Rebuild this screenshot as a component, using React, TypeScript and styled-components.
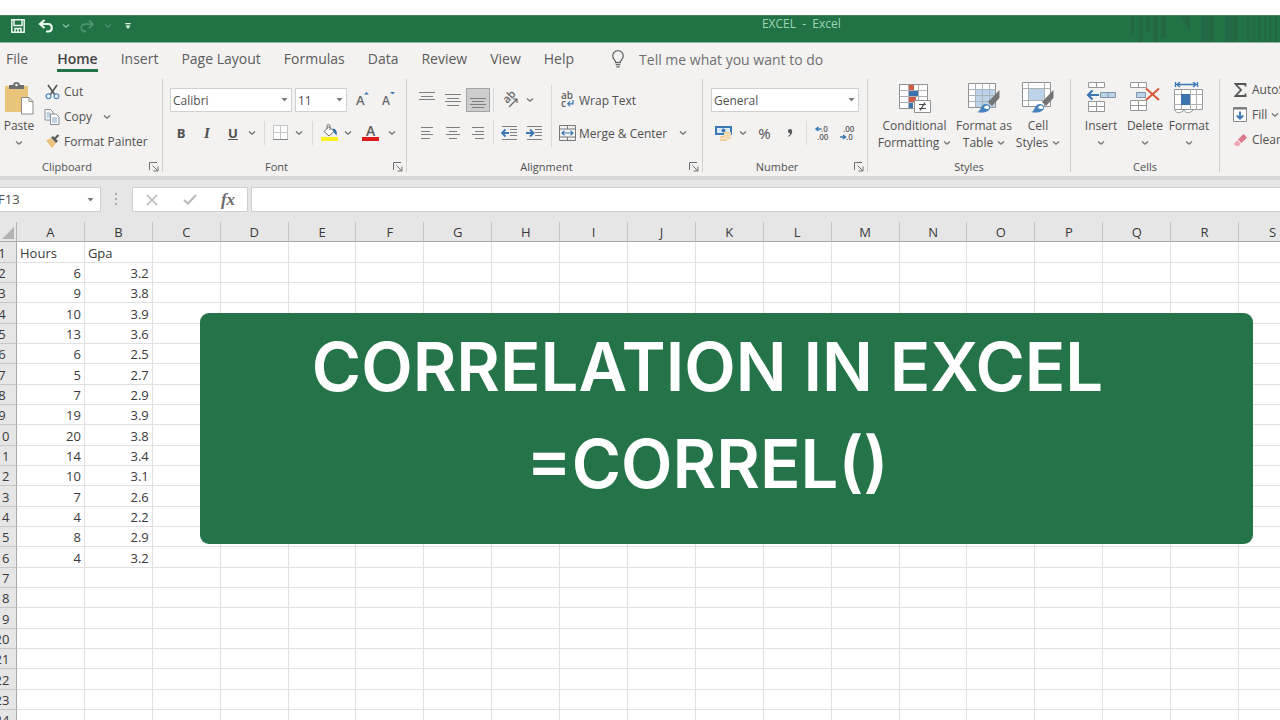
import React from "react";
import styled, { createGlobalStyle, css } from "styled-components";

const GlobalStyle = createGlobalStyle`
  * { box-sizing: border-box; }
  body {
    margin: 0;
    background: #ffffff;
    color: #505050;
    font-family: "Open Sans", "Noto Sans", sans-serif;
    font-size: 12px;
    line-height: 17px;
    overflow: hidden;
  }
  button, select, input { font: inherit; color: inherit; }
  svg { flex: none; }
`;

const GRAY = "#808080";
const BLUE = "#3b78b4";

/* ---------- window frame ---------- */

const Window = styled.div`
  position: relative;
  height: 100vh;
  padding-top: 15px;
  overflow: hidden;
`;

const TitleBar = styled.header`
  display: grid;
  grid-template-columns: 25fr 17fr;
  height: 28px;
  background: #217346;
  border-top: 1px solid #3f8560;
  border-bottom: 1px solid #8fb8a0;
`;

const QuickAccess = styled.div`
  display: flex;
  align-items: center;
  height: 20px;
  padding-left: 6px;
`;

const QuickButton = styled.button<{ $w: number; $dim?: boolean }>`
  display: flex;
  flex: none;
  align-items: center;
  justify-content: center;
  width: ${(p) => p.$w}px;
  height: 20px;
  padding: 0;
  border: 0;
  background: none;
  color: ${(p) => (p.$dim ? "#4f9370" : "#e9f5ee")};
`;

const TitleArea = styled.div`
  display: flex;
  justify-content: space-between;
`;

const DocumentTitle = styled.h1`
  margin: 0;
  font-size: 12px;
  font-weight: 400;
  line-height: 15px;
  color: #9fd3b5;
  white-space: pre;
`;

/* ---------- tabs ---------- */

const TabRow = styled.nav`
  display: flex;
  gap: 23px;
  height: 34px;
  padding: 6px 0 0 6px;
  background: #f3f2f1;
  font-size: 14px;
  white-space: nowrap;
`;

const Tab = styled.a<{ $active?: boolean }>`
  height: 23px;
  line-height: 20px;
  color: ${(p) => (p.$active ? "#444444" : "#5c5c5c")};
  font-weight: ${(p) => (p.$active ? 600 : 400)};
  text-decoration: none;
  border-bottom: 3px solid ${(p) => (p.$active ? "#217346" : "transparent")};

  &:first-child { margin-right: 6px; }
`;

const TellMe = styled.button`
  display: flex;
  align-items: center;
  gap: 14px;
  height: 20px;
  margin-left: 14px;
  padding: 0;
  border: 0;
  background: none;
  color: #707070;
`;

/* ---------- ribbon ---------- */

const Ribbon = styled.div`
  display: flex;
  height: 103px;
  background: #f3f2f1;
  border-bottom: 4px solid #d6d6d6;
  white-space: nowrap;
`;

const GroupBox = styled.section<{ $w: number; $cut?: boolean }>`
  display: flex;
  flex: none;
  flex-direction: column;
  width: ${(p) => p.$w}px;
  ${(p) => p.$cut && css`margin-left: -12px; padding-left: 12px;`}
`;

const GroupBody = styled.div`
  display: flex;
  height: 81px;
`;

const GroupFooter = styled.div<{ $shift?: boolean }>`
  display: flex;
  align-items: center;
  height: 17px;
  margin-left: ${(p) => (p.$shift ? -12 : 0)}px;
  font-size: 11px;
`;

const GroupLabel = styled.span`
  flex: 1;
  text-align: center;
`;

const GroupDivider = styled.div`
  flex: none;
  width: 1px;
  height: 93px;
  margin-top: 2px;
  background: #d0cfce;
`;

const SmallDivider = styled.div<{ $m: number }>`
  flex: none;
  width: 1px;
  height: 24px;
  margin: 0 ${(p) => p.$m}px;
  background: #dad9d8;
`;

const TallDivider = styled.div`
  width: 1px;
  height: 62px;
  margin: 8px 7px 0 4px;
  background: #dad9d8;
`;

const Tool = styled.button<{ $w: number; $on?: boolean }>`
  display: flex;
  flex: none;
  align-items: center;
  justify-content: center;
  width: ${(p) => p.$w}px;
  height: 24px;
  padding: 0;
  border: 1px solid ${(p) => (p.$on ? "#a3a3a3" : "transparent")};
  background: ${(p) => (p.$on ? "#cdcdcd" : "none")};
`;

const Glyph = styled.span<{ $kind: "bold" | "italic" | "under" | "percent" }>`
  font-size: ${(p) => (p.$kind === "percent" ? 15 : 13)}px;
  font-weight: ${(p) => (p.$kind === "percent" ? 400 : 700)};
  ${(p) => p.$kind === "italic" && css`font-family: "Liberation Serif", serif; font-size: 15px; font-style: italic;`}
  ${(p) => p.$kind === "under" && css`text-decoration: underline;`}
`;

const ToolRows = styled.div<{ $pad: number }>`
  display: flex;
  flex-direction: column;
  gap: 9px;
  padding: 11px 0 0 ${(p) => p.$pad}px;
`;

const ToolRow = styled.div<{ $gap?: number }>`
  display: flex;
  align-items: center;
  gap: ${(p) => p.$gap || 0}px;
  height: 24px;
`;

const LabelTool = styled.button<{ $h: number }>`
  display: flex;
  align-items: center;
  gap: 4px;
  height: ${(p) => p.$h}px;
  padding: 0;
  border: 0;
  background: none;
  text-align: left;
`;

const LabelIcon = styled.span`
  display: flex;
  justify-content: center;
  width: 16px;
`;

const TextColumn = styled.div<{ $top: number; $left: number }>`
  display: flex;
  flex-direction: column;
  padding: ${(p) => p.$top}px 0 0 ${(p) => p.$left}px;
`;

const ChevronGap = styled.span<{ $w: number }>`
  display: flex;
  justify-content: flex-end;
  width: ${(p) => p.$w}px;
`;

const BigTools = styled.div`
  display: flex;
  padding-left: 8px;
`;

const BigTool = styled.button<{ $w: number }>`
  display: flex;
  flex: none;
  flex-direction: column;
  align-items: center;
  width: ${(p) => p.$w}px;
  height: 76px;
  margin-top: 5px;
  padding: 0;
  border: 0;
  background: none;
`;

const BigIcon = styled.span`
  display: flex;
  align-items: flex-start;
  height: 35px;
`;

const BigLine = styled.span`
  display: flex;
  align-items: center;
  gap: 4px;
  height: 17px;
`;

const Picker = styled.div<{ $w: number }>`
  position: relative;
  width: ${(p) => p.$w}px;
  height: 24px;

  select {
    width: 100%;
    height: 24px;
    padding: 0 2px;
    border: 1px solid #d2d0ce;
    border-radius: 0;
    background: #ffffff;
    appearance: none;
  }
  svg {
    position: absolute;
    top: 10px;
    right: 4px;
    pointer-events: none;
  }
`;

/* ---------- formula bar ---------- */

const FormulaBar = styled.div`
  display: flex;
  align-items: center;
  height: 42px;
  padding-bottom: 4px;
  background: #e6e6e6;
`;

const NameBox = styled.div`
  position: relative;
  width: 101px;

  input {
    width: 100%;
    height: 25px;
    padding: 0;
    border: 1px solid #d0d0d0;
    border-left: 0;
    background: #ffffff;
    font-size: 13px;
    text-indent: -2px;
  }
  svg {
    position: absolute;
    top: 11px;
    right: 7px;
  }
`;

const Grip = styled.div`
  display: flex;
  justify-content: center;
  width: 31px;
`;

const FormulaButtons = styled.div`
  display: flex;
  width: 116px;
  height: 25px;
  margin-right: 3px;
  background: #ffffff;
  border: 1px solid #d0d0d0;
`;

const FormulaInput = styled.input`
  flex: 1;
  min-width: 0;
  height: 25px;
  border: 1px solid #d0d0d0;
  border-right: 0;
  background: #ffffff;
`;

const FxGlyph = styled.span`
  font-family: "Liberation Serif", serif;
  font-size: 17px;
  font-style: italic;
  font-weight: 700;
  color: #6c6c6c;
`;

/* ---------- worksheet ---------- */

const Sheet = styled.table`
  width: calc(100% + 39px);
  margin-left: -12px;
  border-collapse: separate;
  border-spacing: 0;
  table-layout: fixed;
  font-size: 13px;
  color: #3a3a3a;

  tbody tr { height: 20px; }
  tbody tr:nth-child(3n + 1) { height: 21px; }
`;

const CornerCell = styled.td`
  width: 29px;
  height: 20px;
  padding: 0 2px 2px 0;
  background: #e6e6e6;
  border-right: 1px solid #b4b4b4;
  border-bottom: 1px solid #a9a9a9;
  vertical-align: bottom;

  svg { display: block; margin-left: auto; }
`;

const ColumnHead = styled.th`
  height: 20px;
  padding: 1px 0 0;
  background: #e6e6e6;
  border-right: 1px solid #c4c4c4;
  border-bottom: 1px solid #a9a9a9;
  font-weight: 400;
  line-height: 18px;
`;

const RowHead = styled.th`
  padding: 1px 0 0;
  background: #e6e6e6;
  border-right: 1px solid #a9a9a9;
  border-bottom: 1px solid #c6c6c6;
  font-size: 13px;
  font-weight: 400;
  line-height: 18px;
`;

const Cell = styled.td<{ $num?: boolean }>`
  padding: 1px 3px 0;
  background: #ffffff;
  border-right: 1px solid #e1e1e1;
  border-bottom: 1px solid #e1e1e1;
  line-height: 18px;
  font-weight: ${(p) => (p.$num ? 500 : 400)};
  text-align: ${(p) => (p.$num ? "right" : "left")};
`;

/* ---------- banner ---------- */

const Banner = styled.div`
  position: absolute;
  top: 313px;
  right: 27px;
  left: 200px;
  padding: 5px 38px 32px 0;
  border-radius: 9px;
  background: #257449;
  color: #ffffff;
  font-family: Inter, sans-serif;
  font-size: 67px;
  font-weight: 600;
  line-height: 97px;
  text-align: center;

  p { margin: 0; }
`;

/* ---------- icons ---------- */

const Chevron = ({ color = "#707070" }: { color?: string }) => (
  <svg width="8" height="6" viewBox="0 0 8 6" fill="none" stroke={color} strokeWidth="1.3">
    <path d="M1 1.500 4 4.200 7 1.500" />
  </svg>
);

const Caret = () => (
  <svg width="7" height="4" viewBox="0 0 7 4" fill="#777777">
    <path d="M.5 0h6L3.500 3.500z" />
  </svg>
);

const Launcher = () => (
  <svg width="10" height="10" viewBox="0 0 10 10" fill="none" stroke="#707070">
    <path d="M.5 8V.5H8M3.500 3.500 8.500 8.500M9 4.500V9H4.500" />
  </svg>
);

const SaveIcon = () => (
  <svg width="16" height="16" viewBox="0 0 16 16" fill="none" stroke="currentColor" strokeWidth="1.5">
    <path d="M1.800 1.800h12.400v12.400H1.800zM4 2v5.500h8V2" />
    <path d="M5 14v-3.500h6V14M8 11v3" />
  </svg>
);

const UndoIcon = () => (
  <svg width="16" height="14" viewBox="0 0 16 14" fill="none" stroke="currentColor" strokeWidth="2.2">
    <path d="M6.500 1 2 5l4.500 4M2.500 5h7.500c5 0 5 7.500 0 7.500H8" />
  </svg>
);

const RedoIcon = () => (
  <svg width="16" height="14" viewBox="0 0 16 14" fill="none" stroke="currentColor" strokeWidth="1.800">
    <path d="M10 1.500 14 5.200 10 9M14 5.200H6c-5 0-5 7.300 0 7.300h1" />
  </svg>
);

const CustomizeIcon = () => (
  <svg width="6" height="8" viewBox="0 0 6 8" fill="currentColor">
    <path d="M.5 1h5v1.200h-5zM.5 3.500h5L3 7z" />
  </svg>
);

const TitleArt = () => (
  <svg width="150" height="26" viewBox="0 0 150 26" fill="#236743">
    <path d="M1 0h3v18H1zM9 0h4v26H9zM16 0h4v17h-4zM23 0h5v26h-5zM31 0h5v22h-5zM51 0h9v15zM71 0h13v26H71zM95 0h13v26H95z" />
    <path d="M117 0h2v26h-2zM123 0h2v26h-2zM128 0h2v26h-2zM134 0h2v26h-2zM139 0h2v26h-2zM145 0h2v26h-2z" />
  </svg>
);

const BulbIcon = () => (
  <svg width="14" height="18" viewBox="0 0 14 18" fill="none" stroke="#686868" strokeWidth="1.300">
    <path d="M4.700 12.500c0-2.500-3-3.500-3-6.500a5.300 5.300 0 0 1 10.600 0c0 3-3 4-3 6.500zM4.700 14.700h4.600M5.300 16.800h3.400" />
  </svg>
);

const PasteIcon = () => (
  <svg width="30" height="34" viewBox="0 0 30 34">
    <path d="M1 4h23v26H1z" fill="#eac47a" />
    <path d="M5 7V3h4c0-4 7-4 7 0h4v4z" fill="#6d6d6d" />
    <circle cx="12.500" cy="3" r="1.300" fill="#f3f2f1" />
    <path d="M17.500 15.500h7.500l4 4V32H17.500z" fill="#fff" stroke="#8a8a8a" />
    <path d="M25 15.500v4h4" fill="none" stroke="#8a8a8a" />
  </svg>
);

const CutIcon = () => (
  <svg width="15" height="16" viewBox="0 0 15 16" fill="none">
    <path d="M3 1 10 11M12 1 5 11" stroke="#5a5a5a" strokeWidth="1.700" />
    <circle cx="3.500" cy="12.300" r="2.400" stroke="#5a8fc4" strokeWidth="1.300" />
    <circle cx="11.500" cy="12.300" r="2.400" stroke="#5a8fc4" strokeWidth="1.300" />
  </svg>
);

const CopyIcon = () => (
  <svg width="16" height="16" viewBox="0 0 16 16" fill="#fff" stroke="#848c94">
    <path d="M1 .5h5.500L9 3v8H1z" />
    <path d="M2.500 4h4M2.500 6h4M2.500 8h4" stroke="#7fa3c4" />
    <path d="M6.500 5h5.500l3 3v7.500H6.500z" />
    <path d="M8 9h5M8 11h5M8 13h5" stroke="#7fa3c4" />
  </svg>
);

const PainterIcon = () => (
  <svg width="15" height="15" viewBox="0 0 15 15">
    <path d="M1 6.500 6 4l5 5-4 5z" fill="#ecc27c" />
    <path d="M6 3.500 8 2l5 5-2 2z" fill="#5c5c5c" />
    <path d="M10 4.500 13.500 1" stroke="#5c5c5c" strokeWidth="2.200" />
  </svg>
);

const FontStepIcon = ({ up }: { up?: boolean }) => (
  <svg width="15" height="22" viewBox="0 0 15 22">
    <text x="1" y="16" fontSize={up ? 13 : 12} fontWeight="600" fill="#686868">A</text>
    <path d={up ? "M9 5.500 11.500 3l2.500 2.500z" : "M9 3h5l-2.500 2.500z"} fill={BLUE} />
  </svg>
);

const BordersIcon = () => (
  <svg width="15" height="16" viewBox="0 0 15 16" fill="#fff" stroke="#c4c4c4">
    <path d="M.5.5h14v14H.5zM7.500.5v14M.5 7.500h14" />
    <path d="M0 14.500h15" stroke="#858585" />
  </svg>
);

const FillIcon = () => (
  <svg width="17" height="18" viewBox="0 0 17 18">
    <path d="M3 7.500 8 2.500l5 5-5 4.500z" fill="#fff" stroke="#6e6e6e" />
    <path d="M6 5V2c0-2 3-2 3 0v4" fill="none" stroke="#6e6e6e" />
    <path d="M11.500 4.500c3.500 0 5 3.500 4 7l-2.500-3z" fill="#2f6fab" />
    <path d="M0 13h17v4H0z" fill="#f7f01c" />
  </svg>
);

const FontColorIcon = () => (
  <svg width="17" height="20" viewBox="0 0 17 20">
    <text x="4" y="13" fontSize="14" fontWeight="600" fill="#5c5c5c">A</text>
    <path d="M0 14h17v4H0z" fill="#e01b1b" />
  </svg>
);

const LinesIcon = ({ d, h = 12 }: { d: string; h?: number }) => (
  <svg width="16" height={h} viewBox={`0 0 16 ${h}`} stroke={GRAY} fill="none">
    <path d={d} />
  </svg>
);

const OrientationIcon = () => (
  <svg width="20" height="20" viewBox="0 0 20 20" fill="none">
    <text x="0" y="0" fontSize="11" fontWeight="600" fill="#646464" transform="translate(7 14) rotate(-45)">ab</text>
    <path d="M9 17 17 9M13 9h4v4" stroke="#646464" strokeWidth="1.200" />
  </svg>
);

const IndentIcon = ({ right }: { right?: boolean }) => (
  <svg width="17" height="15" viewBox="0 0 17 15" fill="none">
    <path d="M1 .5h15M9 3.500h7M9 6.500h7M9 9.500h7M1 13.500h15" stroke={GRAY} />
    <path d={right ? "M0 7h7M4 3.500 7.500 7 4 10.500" : "M8 7H1M4.500 3.500 1 7l3.500 3.500"} stroke={BLUE} strokeWidth="1.900" />
  </svg>
);

const WrapIcon = () => (
  <svg width="15" height="22" viewBox="0 0 15 22" fill="none">
    <text x="1" y="10" fontSize="10" fontWeight="600" fill="#646464">ab</text>
    <text x="1" y="18" fontSize="10" fontWeight="600" fill="#646464">c</text>
    <path d="M13 11v3.800H8M10 12.500 7.700 14.800l2.300 2.300" stroke={BLUE} strokeWidth="1.200" />
  </svg>
);

const MergeIcon = () => (
  <svg width="17" height="16" viewBox="0 0 17 16" fill="none" stroke="#787878">
    <path d="M.5.5h16v15H.5zM.5 4h16M.5 12h16M8.500.5V4M8.500 12v3.500" />
    <path d="M3 8h11M5.500 5.800 3 8l2.500 2.200M11.500 5.800 14 8l-2.500 2.200" stroke={BLUE} strokeWidth="1.200" />
  </svg>
);

const CurrencyIcon = () => (
  <svg width="17" height="17" viewBox="0 0 17 17">
    <path d="M0 1h17v9H0z" fill={BLUE} />
    <path d="M2 3h13v5H2z" fill="#dceaf6" />
    <circle cx="8.500" cy="5.500" r="2" fill={BLUE} />
    <path d="M9 7h7v7H9z" fill="#f0cf9a" />
    <path d="M5 11h7v5H5z" fill="#f0cf9a" />
    <path d="M9 9.500h7M9 12h7M5 13.500h6" stroke="#fff" strokeWidth=".6" />
  </svg>
);

const CommaIcon = () => (
  <svg width="6" height="10" viewBox="0 0 6 10" fill="#5c5c5c">
    <path d="M3 1a2.200 2.200 0 0 1 2.200 2.300C5.200 6 3.500 8 1.200 9V8c1.200-.8 1.800-1.600 1.900-2.600A2.200 2.200 0 0 1 3 1z" />
  </svg>
);

const DecimalIcon = ({ less }: { less?: boolean }) => (
  <svg width="18" height="22" viewBox="0 0 18 22" fill="none">
    <text x={less ? 4 : 7} y="10" fontSize="8" fontWeight="600" fill="#5c5c5c">{less ? ".00" : ".0"}</text>
    <text x={less ? 7 : 3} y="18" fontSize="8" fontWeight="600" fill="#5c5c5c">{less ? ".0" : ".00"}</text>
    <path d={less ? "M1 15h5.500M4 13l2.500 2L4 17" : "M7.500 7H2M4.500 5 2 7l2.500 2"} stroke={BLUE} strokeWidth="1.500" />
  </svg>
);

const ConditionalIcon = () => (
  <svg width="32" height="31" viewBox="0 0 32 31" fill="none">
    <path d="M.5 2.500h28v24H.5z" fill="#fff" stroke="#909090" />
    <path d="M9.500 2.500v24M19.500 2.500v24M.5 8.500h28M.5 14.500h28M.5 20.500h28" stroke="#b0b0b0" />
    <path d="M10 3h5v5h-5zM10 15h7v5h-7z" fill="#cf5a45" />
    <path d="M10 9h9v5h-9zM10 21h4v5h-4z" fill="#3c74b0" />
    <path d="M15.500 18.500h16v12h-16z" fill="#fff" stroke="#909090" />
    <path d="M20 22.500h7M20 26.500h7M26 20.500l-5 8" stroke="#4a4a4a" strokeWidth="1.200" />
  </svg>
);

const Brush = () => (
  <g>
    <path d="M31.500 8v8l-7.500 8-4-4z" fill="#747474" />
    <path d="M9 30c4 0 3-8 9-8 4 0 5 4 3 6-3 3-8 3-12 2z" fill="#4682bd" />
    <path d="M16 26c1-3 4-3 5-1s-2 3-5 1z" fill="#fff" />
  </g>
);

const FormatTableIcon = () => (
  <svg width="32" height="31" viewBox="0 0 32 31" fill="none">
    <path d="M.5 1.500h27v24H.5z" fill="#fff" stroke="#909090" />
    <path d="M8 8h19v17H8z" fill="#bcd3ea" />
    <path d="M7.500 1.500v24M14.500 1.500v24M21.500 1.500v24M.5 7.500h27M.5 13.500h27M.5 19.500h27" stroke="#a9b3bd" />
    <Brush />
  </svg>
);

const CellStylesIcon = () => (
  <svg width="32" height="32" viewBox="0 0 32 32" fill="none">
    <path d="M.5.5h28v24H.5z" fill="#fff" stroke="#909090" />
    <path d="M6.500.5v24M22.500.5v24M.5 6.500h28M.5 18.500h28" stroke="#b0b0b0" />
    <path d="M7 7h15v11H7z" fill="#bcd3ea" />
    <Brush />
  </svg>
);

const InsertCellsIcon = () => (
  <svg width="30" height="31" viewBox="0 0 30 31" fill="none">
    <path d="M2.500.5h16v5h-16zM10.500.5v5M2.500 19.500h16v10h-16zM10.500 19.500v10M2.500 24.500h16" fill="#fff" stroke="#989898" />
    <path d="M14.500 10.500h15v5h-15zM22 10.500v5" fill="#bcd3ea" stroke="#8094a8" />
    <path d="M13 13H2M6.500 8.500 2 13l4.500 4.500" stroke={BLUE} strokeWidth="2.200" />
  </svg>
);

const DeleteCellsIcon = () => (
  <svg width="30" height="31" viewBox="0 0 30 31" fill="none">
    <path d="M.5.5h16v5H.5zM8.500.5v5M.5 18.500h16v10H.5zM8.500 18.500v10M.5 23.500h16" fill="#fff" stroke="#989898" />
    <path d="M6.500 10.500h9v5h-9z" fill="#bcd3ea" stroke="#8094a8" />
    <path d="M16 6.500 29 18M29 6.500 16 18" stroke="#d65a3a" strokeWidth="2" />
  </svg>
);

const FormatCellsIcon = () => (
  <svg width="30" height="32" viewBox="0 0 30 32" fill="none">
    <path d="M1.500 0v5M23.500 0v5M3 2.500h19M6 0 3 2.500 6 5M19 0l3 2.500L19 5" stroke={BLUE} strokeWidth="1.400" />
    <path d="M.5 7.500h28v20H.5z" fill="#fff" stroke="#989898" />
    <path d="M7.500 7.500v20M16.500 7.500v20M22.500 7.500v20M.5 12.500h28M.5 22.500h28" stroke="#b0b0b0" />
    <path d="M7 12h9v11H7z" fill="#3c74b0" />
    <path d="M1 28c1 4 7 3 9 0 2 4 7 3 9 0" fill="#fff" stroke="#989898" />
  </svg>
);

const SumIcon = () => (
  <svg width="13" height="14" viewBox="0 0 13 14" fill="none" stroke="#565656" strokeWidth="1.800">
    <path d="M11.500 3.500V1H1.500L7 7l-5.500 6h10v-2.500" />
  </svg>
);

const FillDownIcon = () => (
  <svg width="14" height="15" viewBox="0 0 14 15" fill="none">
    <path d="M.5.5h13v14H.5z" fill="#fff" stroke="#8a8a8a" />
    <path d="M.5 1.500h13" stroke="#7a7a7a" strokeWidth="2" />
    <path d="M7 4.500v7M3.800 8.500 7 11.700l3.200-3.200" stroke={BLUE} strokeWidth="1.900" />
  </svg>
);

const EraserIcon = () => (
  <svg width="14" height="14" viewBox="0 0 14 14">
    <path d="M5 6.500 10.500 1 14 4.500 8.500 10z" fill="#e0788c" />
    <path d="M4.300 7.200 7.800 10.700 5.500 13H3L1 11V10.500z" fill="#eda5b2" />
  </svg>
);

const CancelIcon = () => (
  <svg width="12" height="12" viewBox="0 0 12 12" stroke="#b8b8b8" strokeWidth="1.500">
    <path d="M1 1l10 10M11 1 1 11" />
  </svg>
);

const EnterIcon = () => (
  <svg width="14" height="11" viewBox="0 0 14 11" fill="none" stroke="#b8b8b8" strokeWidth="2">
    <path d="M1 6l4 3.500L13 1" />
  </svg>
);

const GripIcon = () => (
  <svg width="3" height="12" viewBox="0 0 3 12" fill="#a8a8a8">
    <path d="M0 0h2v2H0zM0 5h2v2H0zM0 10h2v2H0z" />
  </svg>
);

/* ---------- parts ---------- */

type GroupProps = {
  label: string;
  width: number;
  launcher?: boolean;
  cut?: boolean;
  children: React.ReactNode;
};

const Group = ({ label, width, launcher, cut, children }: GroupProps) => (
  <>
    <GroupBox $w={width} $cut={cut} aria-label={label}>
      <GroupBody>{children}</GroupBody>
      <GroupFooter $shift={cut}>
        <GroupLabel>{label}</GroupLabel>
        {launcher && (
          <Tool $w={16} aria-label={`${label} settings`}>
            <Launcher />
          </Tool>
        )}
      </GroupFooter>
    </GroupBox>
    <GroupDivider />
  </>
);

const Drop = ({ label }: { label: string }) => (
  <Tool $w={16} aria-label={label}>
    <Chevron />
  </Tool>
);

type BigProps = { icon: React.ReactNode; width: number; lines: string[]; below?: boolean };

const Big = ({ icon, width, lines, below }: BigProps) => (
  <BigTool $w={width}>
    <BigIcon>{icon}</BigIcon>
    {lines.map((line, i) => (
      <BigLine key={line}>
        {line}
        {!below && i === lines.length - 1 && <Chevron />}
      </BigLine>
    ))}
    {below && (
      <BigLine>
        <Chevron />
      </BigLine>
    )}
  </BigTool>
);

const Select = ({ label, width, value }: { label: string; width: number; value: string }) => (
  <Picker $w={width}>
    <select aria-label={label} defaultValue={value}>
      <option>{value}</option>
    </select>
    <Caret />
  </Picker>
);

/* ---------- data ---------- */

const TABS = ["File", "Home", "Insert", "Page Layout", "Formulas", "Data", "Review", "View", "Help"];
const COLUMNS = "ABCDEFGHIJKLMNOPQRS".split("");
const ROWS: string[][] = [
  ["Hours", "Gpa"],
  ["6", "3.2"],
  ["9", "3.8"],
  ["10", "3.9"],
  ["13", "3.6"],
  ["6", "2.5"],
  ["5", "2.7"],
  ["7", "2.9"],
  ["19", "3.9"],
  ["20", "3.8"],
  ["14", "3.4"],
  ["10", "3.1"],
  ["7", "2.6"],
  ["4", "2.2"],
  ["8", "2.9"],
  ["4", "3.2"],
];
const ROW_COUNT = 24;

export default function App() {
  return (
    <Window>
      <GlobalStyle />
      <TitleBar>
        <QuickAccess>
          <QuickButton $w={24} aria-label="Save"><SaveIcon /></QuickButton>
          <QuickButton $w={32} aria-label="Undo"><UndoIcon /></QuickButton>
          <QuickButton $w={8} aria-label="Undo history"><Chevron color="#8fc3a6" /></QuickButton>
          <QuickButton $w={34} $dim aria-label="Redo"><RedoIcon /></QuickButton>
          <QuickButton $w={8} aria-label="Redo history"><Chevron color="#4f9370" /></QuickButton>
          <QuickButton $w={32} aria-label="Customize toolbar"><CustomizeIcon /></QuickButton>
        </QuickAccess>
        <TitleArea>
          <DocumentTitle>{"EXCEL  -  Excel"}</DocumentTitle>
          <TitleArt />
        </TitleArea>
      </TitleBar>

      <TabRow>
        {TABS.map((tab) => (
          <Tab key={tab} href="#" $active={tab === "Home"}>{tab}</Tab>
        ))}
        <TellMe>
          <BulbIcon />
          Tell me what you want to do
        </TellMe>
      </TabRow>

      <Ribbon>
        <Group label="Clipboard" width={174} launcher cut>
          <Big icon={<PasteIcon />} width={38} lines={["Paste"]} below />
          <TextColumn $top={2} $left={6}>
            <LabelTool $h={25}><LabelIcon><CutIcon /></LabelIcon>Cut</LabelTool>
            <LabelTool $h={25}>
              <LabelIcon><CopyIcon /></LabelIcon>Copy
              <ChevronGap $w={15}><Chevron /></ChevronGap>
            </LabelTool>
            <LabelTool $h={25}><LabelIcon><PainterIcon /></LabelIcon>Format Painter</LabelTool>
          </TextColumn>
        </Group>

        <Group label="Font" width={243} launcher>
          <ToolRows $pad={7}>
            <ToolRow $gap={3}>
              <Select label="Font name" width={122} value="Calibri" />
              <Select label="Font size" width={52} value="11" />
              <Tool $w={24} aria-label="Increase font size"><FontStepIcon up /></Tool>
              <Tool $w={22} aria-label="Decrease font size"><FontStepIcon /></Tool>
            </ToolRow>
            <ToolRow>
              <Tool $w={22} aria-label="Bold"><Glyph $kind="bold">B</Glyph></Tool>
              <Tool $w={30} aria-label="Italic"><Glyph $kind="italic">I</Glyph></Tool>
              <Tool $w={22} aria-label="Underline"><Glyph $kind="under">U</Glyph></Tool>
              <Drop label="Underline style" />
              <SmallDivider $m={4} />
              <Tool $w={22} aria-label="Borders"><BordersIcon /></Tool>
              <Drop label="Border style" />
              <SmallDivider $m={5} />
              <Tool $w={22} aria-label="Fill color"><FillIcon /></Tool>
              <Drop label="Fill colors" />
              <Tool $w={28} aria-label="Font color"><FontColorIcon /></Tool>
              <Drop label="Font colors" />
            </ToolRow>
          </ToolRows>
        </Group>

        <Group label="Alignment" width={295} launcher>
          <ToolRows $pad={8}>
            <ToolRow>
              <Tool $w={24} aria-label="Top align"><LinesIcon h={16} d="M0 .5h16M2 4.500h12M0 7.500h16" /></Tool>
              <Tool $w={27} aria-label="Middle align"><LinesIcon d="M0 .5h16M2 4.500h12M0 7.500h16M2 11.500h12" /></Tool>
              <Tool $w={24} $on aria-label="Bottom align"><LinesIcon h={16} d="M0 6.500h16M2 9.500h12M0 12.500h16M2 15.500h12" /></Tool>
              <SmallDivider $m={3} />
              <Tool $w={25} aria-label="Orientation"><OrientationIcon /></Tool>
              <Drop label="Orientation options" />
            </ToolRow>
            <ToolRow>
              <Tool $w={24} aria-label="Align left"><LinesIcon d="M2 .5h12M2 4.500h9M2 7.500h12M2 11.500h9" /></Tool>
              <Tool $w={27} aria-label="Center"><LinesIcon d="M1 .5h14M4 4.500h8M1 7.500h14M4 11.500h8" /></Tool>
              <Tool $w={24} aria-label="Align right"><LinesIcon d="M2 .5h12M5 4.500h9M2 7.500h12M5 11.500h9" /></Tool>
              <SmallDivider $m={3} />
              <Tool $w={25} aria-label="Decrease indent"><IndentIcon /></Tool>
              <Tool $w={25} aria-label="Increase indent"><IndentIcon right /></Tool>
            </ToolRow>
          </ToolRows>
          <TallDivider />
          <ToolRows $pad={0}>
            <LabelTool $h={24}><LabelIcon><WrapIcon /></LabelIcon>Wrap Text</LabelTool>
            <LabelTool $h={24}>
              <LabelIcon><MergeIcon /></LabelIcon>Merge &amp; Center
              <ChevronGap $w={16}><Chevron /></ChevronGap>
            </LabelTool>
          </ToolRows>
        </Group>

        <Group label="Number" width={164} launcher>
          <ToolRows $pad={8}>
            <Select label="Number format" width={148} value="General" />
            <ToolRow>
              <Tool $w={24} aria-label="Accounting format"><CurrencyIcon /></Tool>
              <Drop label="Currencies" />
              <Tool $w={27} aria-label="Percent"><Glyph $kind="percent">%</Glyph></Tool>
              <Tool $w={24} aria-label="Comma style"><CommaIcon /></Tool>
              <SmallDivider $m={4} />
              <Tool $w={24} aria-label="Increase decimal"><DecimalIcon /></Tool>
              <Tool $w={26} aria-label="Decrease decimal"><DecimalIcon less /></Tool>
            </ToolRow>
          </ToolRows>
        </Group>

        <Group label="Styles" width={202}>
          <BigTools>
            <Big icon={<ConditionalIcon />} width={77} lines={["Conditional", "Formatting"]} />
            <Big icon={<FormatTableIcon />} width={62} lines={["Format as", "Table"]} />
            <Big icon={<CellStylesIcon />} width={46} lines={["Cell", "Styles"]} />
          </BigTools>
        </Group>

        <Group label="Cells" width={148}>
          <BigTools>
            <Big icon={<InsertCellsIcon />} width={44} lines={["Insert"]} below />
            <Big icon={<DeleteCellsIcon />} width={44} lines={["Delete"]} below />
            <Big icon={<FormatCellsIcon />} width={44} lines={["Format"]} below />
          </BigTools>
        </Group>

        <TextColumn $top={0} $left={12}>
          <LabelTool $h={25}><LabelIcon><SumIcon /></LabelIcon>AutoSum</LabelTool>
          <LabelTool $h={25}><LabelIcon><FillDownIcon /></LabelIcon>Fill <Chevron /></LabelTool>
          <LabelTool $h={25}><LabelIcon><EraserIcon /></LabelIcon>Clear</LabelTool>
        </TextColumn>
      </Ribbon>

      <FormulaBar>
        <NameBox>
          <input aria-label="Name box" defaultValue="F13" />
          <Caret />
        </NameBox>
        <Grip><GripIcon /></Grip>
        <FormulaButtons>
          <Tool $w={38} aria-label="Cancel"><CancelIcon /></Tool>
          <Tool $w={38} aria-label="Enter"><EnterIcon /></Tool>
          <Tool $w={38} aria-label="Insert function"><FxGlyph>fx</FxGlyph></Tool>
        </FormulaButtons>
        <FormulaInput aria-label="Formula" />
      </FormulaBar>

      <Sheet>
        <thead>
          <tr>
            <CornerCell>
              <svg width="12" height="12" viewBox="0 0 12 12" fill="#b3b3b3"><path d="M12 0v12H0z" /></svg>
            </CornerCell>
            {COLUMNS.map((c) => <ColumnHead key={c} scope="col">{c}</ColumnHead>)}
          </tr>
        </thead>
        <tbody>
          {Array.from({ length: ROW_COUNT }, (_, r) => (
            <tr key={r}>
              <RowHead scope="row">{r + 1}</RowHead>
              {COLUMNS.map((c, i) => (
                <Cell key={c} $num={r > 0}>{ROWS[r]?.[i]}</Cell>
              ))}
            </tr>
          ))}
        </tbody>
      </Sheet>

      <Banner>
        <p>CORRELATION IN EXCEL</p>
        <p>=CORREL()</p>
      </Banner>
    </Window>
  );
}
